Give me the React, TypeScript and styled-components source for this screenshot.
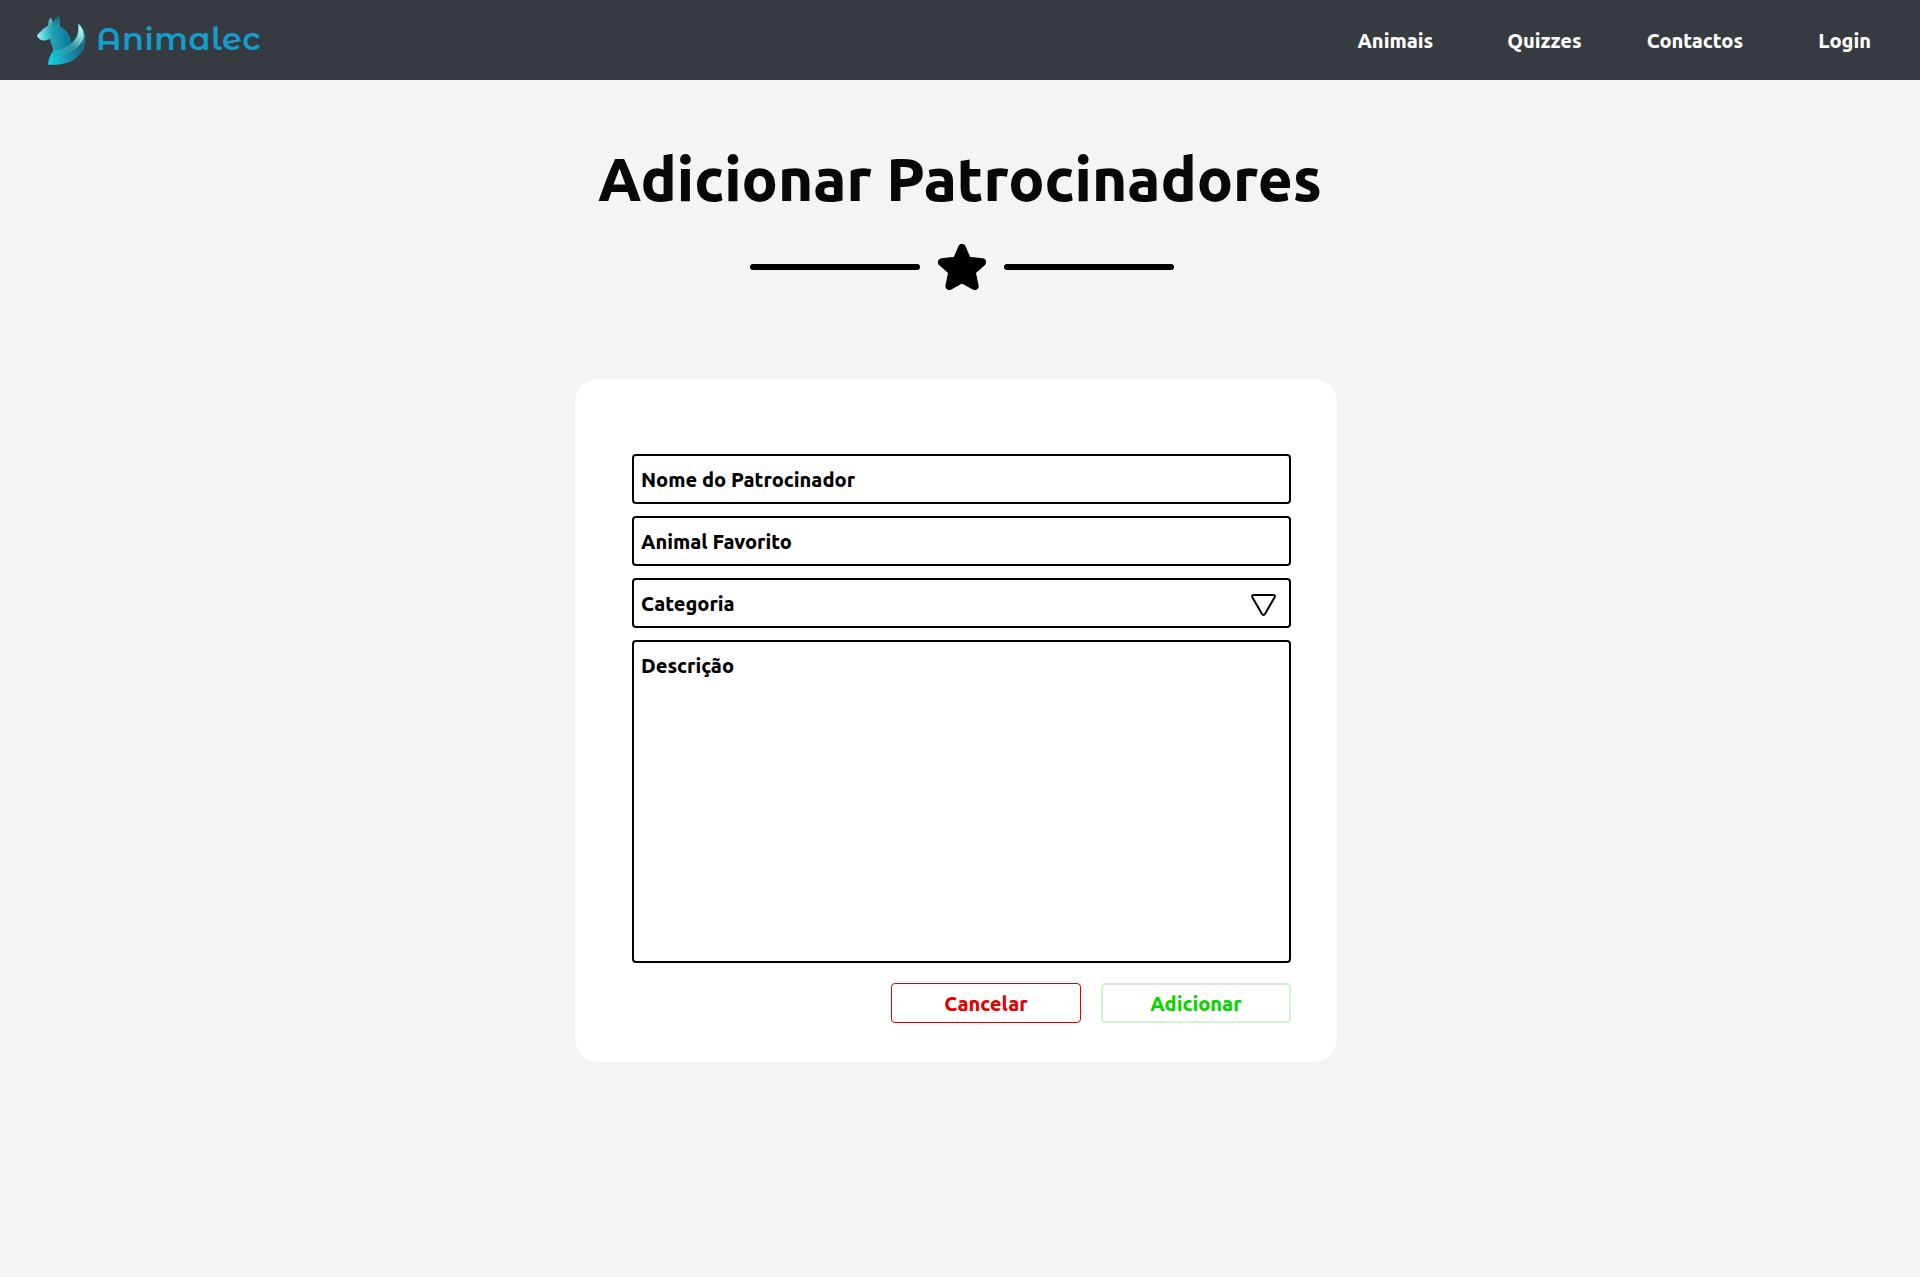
import React from "react";
import styled, { createGlobalStyle } from "styled-components";

const GlobalStyle = createGlobalStyle`
  *, *::before, *::after {
    box-sizing: border-box;
  }
  body {
    margin: 0;
    background: #f3f4f6;
    font-family: Ubuntu, "Noto Sans", sans-serif;
  }
`;

const Page = styled.div`
  min-height: 1277px;
  display: flex;
  flex-direction: column;
  align-items: center;
`;

const Header = styled.header`
  width: 100%;
  height: 80px;
  padding: 0 49px 0 30px;
  display: flex;
  align-items: center;
  justify-content: space-between;
  background: #363a41;
`;

const Brand = styled.a`
  display: flex;
  align-items: center;
  gap: 2px;
  text-decoration: none;
`;

const BrandName = styled.span`
  padding-bottom: 3px;
  color: #149dcc;
  font: 600 32px "Montserrat Alternates", Montserrat, Inter, sans-serif;
  letter-spacing: 0.5px;
`;

const Nav = styled.nav`
  display: flex;
  padding-top: 1px;
`;

const NavLink = styled.a<{ $gap?: number }>`
  margin-left: ${(p) => p.$gap ?? 0}px;
  color: #fff;
  font-size: 20px;
  font-weight: 800;
  text-decoration: none;
`;

const Title = styled.h1`
  margin: 64px 0 0;
  color: #080808;
  font-size: 60px;
  font-weight: 800;
  line-height: 70px;
`;

const Divider = styled.div`
  margin: 30px 0 0 4px;
  display: flex;
  align-items: center;
  gap: 18px;
`;

const Bar = styled.span`
  width: 170px;
  height: 6px;
  border-radius: 3px;
  background: #000;
`;

const Card = styled.form`
  width: 762px;
  height: 683px;
  margin: 89px 8px 0 0;
  padding: 75px 46px 0 57px;
  display: flex;
  flex-direction: column;
  gap: 12px;
  border-radius: 24px;
  background: #fff;
`;

const Field = styled.div<{ $height?: number }>`
  height: ${(p) => p.$height ?? 50}px;
  padding: 0 13px 0 7px;
  display: flex;
  justify-content: space-between;
  border: 2px solid #000;
  border-radius: 4px;
`;

const Label = styled.span`
  padding-top: 1px;
  font-size: 20px;
  font-weight: 800;
  line-height: 46px;
`;

const Arrow = styled.svg`
  margin-top: 13px;
`;

const Actions = styled.div`
  margin-top: 8px;
  display: flex;
  justify-content: flex-end;
  gap: 20px;
`;

const Button = styled.button<{ $color: string; $border: string }>`
  width: 190px;
  height: 40px;
  padding: 1px 0 0;
  border: ${(p) => p.$border};
  border-radius: 4px;
  background: #fff;
  color: ${(p) => p.$color};
  font: 800 20px Ubuntu, "Noto Sans", sans-serif;
`;

const FoxLogo = () => (
  <svg width="64" height="64" viewBox="0 0 64 64">
    <defs>
      <linearGradient id="body" gradientUnits="userSpaceOnUse" x1="8" y1="28" x2="36" y2="26">
        <stop offset="0" stopColor="#9bf0ee" />
        <stop offset="0.2" stopColor="#5fd6dc" />
        <stop offset="0.5" stopColor="#25a2b5" />
        <stop offset="1" stopColor="#0b809d" />
      </linearGradient>
      <linearGradient id="ear" x1="0" y1="0" x2="0" y2="1">
        <stop offset="0" stopColor="#15687c" />
        <stop offset="1" stopColor="#2498aa" />
      </linearGradient>
      <linearGradient id="tail" gradientUnits="userSpaceOnUse" x1="20" y1="57" x2="52" y2="22">
        <stop offset="0" stopColor="#12dbe8" />
        <stop offset="0.35" stopColor="#22a9bd" />
        <stop offset="0.6" stopColor="#3594aa" />
        <stop offset="0.82" stopColor="#7fcdd0" />
        <stop offset="1" stopColor="#b5f5ee" />
      </linearGradient>
      <linearGradient id="tailEdge" gradientUnits="userSpaceOnUse" x1="19" y1="57" x2="55" y2="28">
        <stop offset="0" stopColor="#14d3e0" />
        <stop offset="0.5" stopColor="#1689a5" />
        <stop offset="0.8" stopColor="#1d6a86" />
        <stop offset="1" stopColor="#2d8f9f" />
      </linearGradient>
    </defs>
    <path fill="#4fb5be" d="M18 18.5 L18.6 13 L20.3 9.2 L22.6 13 L23 18Z" />
    <path
      fill="url(#body)"
      d="M7 27.2 Q12 22 14 20.2 Q17.4 17 22.5 16.5 L30 18.2 Q37.5 22 40.4 30 L41.3 36 Q34 42 22.5 46 Q24 39 21 35.5 L20.4 31.2 Q18.2 31.2 16.4 32.2 Q12.4 33 9.6 30.9 Q7.2 29.8 7 27.2Z"
    />
    <path fill="url(#ear)" d="M21.5 16.6 L24.2 12 L28.7 7.2 Q30.8 12.8 30 19 Q26 21 21.5 16.6Z" />
    <path
      fill="url(#tailEdge)"
      d="M18.3 56.8 Q18.2 49 23.2 42.5 L25.3 40 L26 41.8 L28.6 38.6 Q33 40 40 35.5 Q49.5 29.5 48.3 15.4 Q55.5 20.5 55.1 32 L54.2 39 L53.5 42.2 L52 43.2 Q43.5 57.8 18.3 56.8Z"
    />
    <path
      fill="url(#tail)"
      d="M18.3 56.8 Q19 48.5 25 43 Q31 42 39 37.2 Q50.3 30.5 48.3 15.4 Q54.2 20.6 53.5 30 Q51 38 41 43.5 Q29 48.5 18.3 56.8Z"
    />
    <path fill="none" stroke="#147c97" strokeOpacity="0.4" strokeWidth="0.8" d="M24 49 Q36 44.8 43.5 39.2 Q48 35.5 50 31" />
  </svg>
);

export default function App() {
  return (
    <>
      <GlobalStyle />
      <Page>
        <Header>
          <Brand>
            <FoxLogo />
            <BrandName>Animalec</BrandName>
          </Brand>
          <Nav>
            <NavLink>Animais</NavLink>
            <NavLink $gap={74}>Quizzes</NavLink>
            <NavLink $gap={65}>Contactos</NavLink>
            <NavLink $gap={75}>Login</NavLink>
          </Nav>
        </Header>

        <Title>Adicionar Patrocinadores</Title>

        <Divider>
          <Bar />
          <svg width="48" height="46" viewBox="0 0 48 46">
            <path
              fill="#000"
              stroke="#000"
              strokeWidth="8"
              strokeLinejoin="round"
              d="M24 4 L29.4 16.6 L44 18.2 L33.6 27.6 L36.6 42 L24 35 L11.4 42 L14.4 27.6 L4 18.2 L18.6 16.6Z"
            />
          </svg>
          <Bar />
        </Divider>

        <Card>
          <Field>
            <Label>Nome do Patrocinador</Label>
          </Field>
          <Field>
            <Label>Animal Favorito</Label>
          </Field>
          <Field>
            <Label>Categoria</Label>
            <Arrow width="26" height="24" viewBox="-0.5 0 26 24">
              <path
                fill="none"
                stroke="#000"
                strokeWidth="2"
                strokeLinejoin="round"
                d="M3.4 2 H22.6 Q25.2 2 24 4.4 L14.8 20.6 Q13 23.6 11.2 20.6 L2 4.4 Q0.8 2 3.4 2Z"
              />
            </Arrow>
          </Field>
          <Field $height={323}>
            <Label>Descrição</Label>
          </Field>
          <Actions>
            <Button type="button" $color="#e30000" $border="1px solid #e30000">
              Cancelar
            </Button>
            <Button type="button" $color="#0bd300" $border="2px solid #cef6cf">
              Adicionar
            </Button>
          </Actions>
        </Card>
      </Page>
    </>
  );
}
